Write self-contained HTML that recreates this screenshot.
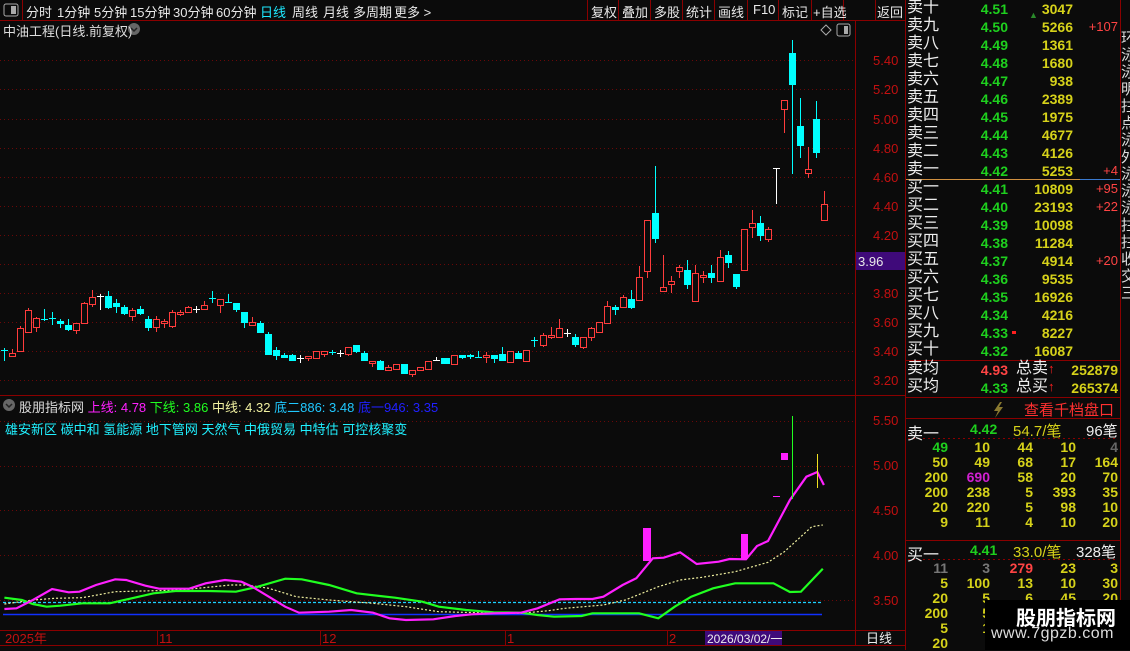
<!DOCTYPE html>
<html><head><meta charset="utf-8"><style>
*{margin:0;padding:0;box-sizing:border-box}
body{width:1130px;height:650px;background:#0b0b0b;overflow:hidden;position:relative;font-family:"Liberation Sans","Noto Sans CJK SC",sans-serif;color:#ddd}
.a{position:absolute;white-space:nowrap}
.tb{font-size:13px;color:#e8e8e8;top:2px}
.ob div{position:absolute;height:18px;line-height:18px;white-space:nowrap}
.lb{left:907px;font-size:16px;color:#eee}
.pr{left:960px;width:48px;text-align:right;font-size:14px;font-weight:bold;color:#1ed01e}
.vo{left:1010px;width:63px;text-align:right;font-size:14px;font-weight:bold;color:#d6d21a}
.ch{left:1075px;width:43px;text-align:right;font-size:13px;color:#ff4444}
.g{position:absolute;font-size:14px;font-weight:bold;color:#d6d21a;text-align:right;width:40px;height:15px;line-height:15px}
</style></head><body>
<svg class="a" style="left:0;top:0" width="1130" height="650" id="s">
<!-- frames -->
<g stroke="#8a0000" stroke-width="1" fill="none">
<line x1="0" y1="20.5" x2="905" y2="20.5"/>
<line x1="855.5" y1="20" x2="855.5" y2="645"/>
<line x1="905.5" y1="0" x2="905.5" y2="650"/>
<line x1="0" y1="395.5" x2="905" y2="395.5"/>
<line x1="0" y1="630.5" x2="905" y2="630.5"/>
<line x1="0" y1="645.5" x2="905" y2="645.5"/>
<line x1="22.5" y1="0" x2="22.5" y2="20"/>
<line x1="1120.5" y1="0" x2="1120.5" y2="650"/>
<line x1="906" y1="360.5" x2="1120" y2="360.5"/>
<line x1="906" y1="397.5" x2="1120" y2="397.5"/>
<line x1="906" y1="418.5" x2="1120" y2="418.5"/>
<line x1="906" y1="540.5" x2="1120" y2="540.5"/>
<line x1="587.5" y1="0" x2="587.5" y2="20"/><line x1="618.5" y1="0" x2="618.5" y2="20"/><line x1="650.5" y1="0" x2="650.5" y2="20"/><line x1="682.5" y1="0" x2="682.5" y2="20"/><line x1="714.5" y1="0" x2="714.5" y2="20"/><line x1="747.5" y1="0" x2="747.5" y2="20"/><line x1="778.5" y1="0" x2="778.5" y2="20"/><line x1="811.5" y1="0" x2="811.5" y2="20"/><line x1="843.5" y1="0" x2="843.5" y2="20"/><line x1="875.5" y1="0" x2="875.5" y2="20"/>
<line x1="157.5" y1="630" x2="157.5" y2="645"/><line x1="320.5" y1="630" x2="320.5" y2="645"/><line x1="505.5" y1="630" x2="505.5" y2="645"/><line x1="667.5" y1="630" x2="667.5" y2="645"/>
</g>
<line x1="906" y1="179.5" x2="1080" y2="179.5" stroke="#d09040"/>
<line x1="1080" y1="179.5" x2="1120" y2="179.5" stroke="#3a7ad0"/>
<line x1="908" y1="438.5" x2="1118" y2="438.5" stroke="#8a0000" stroke-dasharray="2,3"/>
<line x1="908" y1="559.5" x2="1118" y2="559.5" stroke="#8a0000" stroke-dasharray="2,3"/>
<g id="grid" stroke="#6a0808" stroke-dasharray="1,3"></g>
<g id="cd"></g>
<g id="ind" fill="none"></g>
<!-- axis ticks -->
<g fill="#c41010" font-size="13" font-family="Liberation Sans">
<text x="873" y="65">5.40</text><text x="873" y="94">5.20</text><text x="873" y="124">5.00</text><text x="873" y="153">4.80</text><text x="873" y="182">4.60</text><text x="873" y="211">4.40</text><text x="873" y="240">4.20</text><text x="873" y="298">3.80</text><text x="873" y="327">3.60</text><text x="873" y="356">3.40</text><text x="873" y="385">3.20</text>
<text x="873" y="425">5.50</text><text x="873" y="470">5.00</text><text x="873" y="515">4.50</text><text x="873" y="560">4.00</text><text x="873" y="605">3.50</text>
<text x="5" y="643" font-family="Liberation Sans,Noto Sans CJK SC">2025年</text><text x="159" y="643">11</text><text x="322" y="643">12</text><text x="507" y="643">1</text><text x="669" y="643">2</text>
</g>
<rect x="856" y="252" width="49" height="18" fill="#3f0a7a"/>
<text x="858" y="266" fill="#e8e8e8" font-size="13" font-family="Liberation Sans">3.96</text>
<rect x="705" y="631" width="77" height="14" fill="#3f0a7a"/>
<text x="707" y="643" fill="#eee" font-size="12" font-family="Liberation Sans,Noto Sans CJK SC">2026/03/02/一</text>
<text x="866" y="643" fill="#eee" font-size="13" font-family="Liberation Sans,Noto Sans CJK SC">日线</text>
<!-- icons -->
<rect x="4" y="4" width="14" height="12" rx="2" fill="none" stroke="#aaa"/><rect x="11" y="6" width="5" height="8" fill="#aaa"/>
<path d="M826 25 L831 30 L826 35 L821 30Z" fill="none" stroke="#aaa"/>
<rect x="837" y="24" width="13" height="12" rx="2" fill="none" stroke="#aaa"/><rect x="844" y="26" width="4" height="8" fill="#aaa"/>
<circle cx="134" cy="29" r="6" fill="#666"/><path d="M131 28 L134 31 L137 28" stroke="#222" fill="none" stroke-width="1.5"/>
<circle cx="9" cy="405" r="6" fill="#666"/><path d="M6 404 L9 407 L12 404" stroke="#222" fill="none" stroke-width="1.5"/>
<path d="M1000 402 L994 411 L998 411 L995 418 L1003 407 L999 407 L1002 402Z" fill="#8a7a30"/>
<text x="1029" y="18" fill="#2a8a2a" font-size="9">▲</text>
<rect x="1012" y="331" width="4" height="3" fill="#ff2020"/>
</svg>

<!-- toolbar -->
<div class="a tb" style="left:26px">分时</div><div class="a tb" style="left:57px">1分钟</div><div class="a tb" style="left:94px">5分钟</div><div class="a tb" style="left:130px">15分钟</div><div class="a tb" style="left:173px">30分钟</div><div class="a tb" style="left:216px">60分钟</div><div class="a tb" style="left:260px;color:#1ee8ff">日线</div><div class="a tb" style="left:292px">周线</div><div class="a tb" style="left:323px">月线</div><div class="a tb" style="left:353px">多周期</div><div class="a tb" style="left:394px">更多 &gt;</div>
<div class="a tb" style="left:591px">复权</div><div class="a tb" style="left:622px">叠加</div><div class="a tb" style="left:654px">多股</div><div class="a tb" style="left:686px">统计</div><div class="a tb" style="left:718px">画线</div><div class="a tb" style="left:753px">F10</div><div class="a tb" style="left:782px">标记</div><div class="a tb" style="left:813px">+自选</div><div class="a tb" style="left:877px">返回</div>
<div class="a" style="left:3px;top:21px;font-size:13px;color:#ddd">中油工程(日线.前复权)</div>
<div class="a" style="left:19px;top:397px;font-size:13px"><span style="color:#ddd">股朋指标网</span> <span style="color:#ff20ff">上线: 4.78</span> <span style="color:#20ff20">下线: 3.86</span> <span style="color:#f0f0a0">中线: 4.32</span> <span style="color:#20c8ff">底二886: 3.48</span> <span style="color:#2020ff">底一946: 3.35</span></div>
<div class="a" style="left:5px;top:419px;font-size:13px;color:#20f0ff">雄安新区 碳中和 氢能源 地下管网 天然气 中俄贸易 中特估 可控核聚变</div>

<div class="ob" id="ob"></div>
<div class="a" style="left:1024px;top:399px;font-size:15px;color:#ff3030">查看千档盘口</div>
<div class="a" style="left:907px;top:420px;font-size:16px;color:#eee">卖一</div>
<div class="a" style="left:970px;top:421px;font-size:14px;font-weight:bold;color:#1ed01e">4.42</div>
<div class="a" style="left:1013px;top:420px;font-size:15px;color:#d6d21a">54.7/笔</div>
<div class="a" style="left:1086px;top:420px;font-size:15px;color:#eee">96笔</div>
<div class="a" style="left:907px;top:541px;font-size:16px;color:#eee">买一</div>
<div class="a" style="left:970px;top:542px;font-size:14px;font-weight:bold;color:#1ed01e">4.41</div>
<div class="a" style="left:1013px;top:541px;font-size:15px;color:#d6d21a">33.0/笔</div>
<div class="a" style="left:1076px;top:541px;font-size:15px;color:#eee">328笔</div>
<div id="gr"></div>
<div class="a" style="left:1121px;top:30px;width:9px;font-size:15px;line-height:17px;color:#ddd;white-space:normal;overflow:hidden;height:320px">环泳泳明拄点泳外泳泳泳拄拄收交三</div>
<div class="a" style="left:985px;top:600px;width:145px;height:50px;background:#000"></div>
<div class="a" style="left:1016px;top:602px;font-size:20px;font-weight:bold;color:#fff">股朋指标网</div>
<div class="a" style="left:991px;top:625px;font-size:16px;color:#ddd;letter-spacing:0.5px">www.7gpzb.com</div>

<script>
var s='http://www.w3.org/2000/svg',g=document.getElementById('grid');
function L(p,a){var e=document.createElementNS(s,a.t);for(var k in a)if(k!='t')e.setAttribute(k,a[k]);p.appendChild(e);return e}
for(var k=0;k<12;k++){var y=Math.round(60.3+k*29.1)+.5;L(g,{t:'line',x1:0,x2:855,y1:y,y2:y});}
[421,466,510,555,600].forEach(function(y){L(g,{t:'line',x1:0,x2:855,y1:y+.5,y2:y+.5})});
var D=[[350,350,348,361,'c'],[353,356,349,357,'r'],[328,351,326,352,'r'],[310,332,308,333,'r'],[318,327,317,332,'r'],[319,319,309,321,'c'],[318,318,312,325,'c'],[321,323,319,328,'c'],[325,329,319,331,'c'],[323,330,323,334,'r'],[303,323,302,323,'r'],[297,304,290,307,'r'],[296,296,294,310,'w'],[296,307,291,309,'c'],[303,306,299,313,'c'],[307,313,305,315,'c'],[310,316,308,321,'r'],[309,313,306,315,'c'],[319,327,316,331,'c'],[319,327,316,332,'r'],[321,323,319,328,'r'],[312,326,310,328,'r'],[312,314,310,316,'r'],[307,312,306,312,'r'],[309,309,306,313,'w'],[305,309,301,309,'r'],[298,298,291,303,'c'],[299,305,299,313,'r'],[302,302,294,303,'c'],[303,309,303,312,'c'],[312,322,312,328,'c'],[322,325,317,325,'r'],[323,332,321,333,'c'],[334,354,332,354,'c'],[350,355,347,360,'c'],[355,357,353,358,'c'],[355,360,354,360,'c'],[358,358,355,363,'w'],[356,358,356,361,'r'],[351,358,351,358,'r'],[351,354,351,357,'r'],[352,352,350,355,'c'],[353,353,350,357,'w'],[347,354,347,356,'r'],[345,351,345,353,'c'],[353,360,351,360,'c'],[361,363,361,367,'r'],[361,369,360,370,'c'],[367,370,365,371,'r'],[364,369,364,369,'r'],[364,373,364,374,'c'],[370,374,370,377,'r'],[367,370,367,370,'r'],[361,369,361,369,'r'],[360,360,357,361,'w'],[358,363,358,364,'c']];
var cd=document.getElementById('cd');
function C(x,d){var t=d[0],b=d[1],h=d[2],l=d[3],c=d[4];
var col=c=='r'?'#ff3c3c':c=='c'?'#00ffff':'#ffffff';
L(cd,{t:'line',x1:x+.5,x2:x+.5,y1:h,y2:l,stroke:col});
if(c=='w'||b-t<1){L(cd,{t:'line',x1:x-3,x2:x+4,y1:t+.5,y2:t+.5,stroke:col});return}
if(c=='r')L(cd,{t:'rect',x:x-2.5,y:t+.5,width:6,height:b-t,fill:'#0b0b0b',stroke:col});
else L(cd,{t:'rect',x:x-3,y:t,width:7,height:b-t+1,fill:col});}
D.forEach(function(d,i){C(4+8*i,d)});
var E=[[446,358,363,358,364,'c'],[454,355,364,355,364,'r'],[462,355,357,355,359,'c'],[470,355,356,354,359,'c'],[478,357,357,351,357,'c'],[486,355,357,352,363,'r'],[494,355,358,355,363,'c'],[502,354,360,347,360,'c'],[510,351,362,351,362,'r'],[518,353,358,351,359,'c'],[526,350,361,350,361,'r'],[534,340,340,337,347,'c'],[543,335,345,333,347,'r'],[551,335,337,327,339,'r'],[559,328,337,319,337,'r'],[567,333,333,329,337,'w'],[575,337,344,334,347,'c'],[583,337,347,337,349,'r'],[591,328,337,327,341,'r'],[599,322,332,322,332,'r'],[607,306,323,301,323,'r'],[615,307,309,305,315,'c'],[623,297,307,295,307,'r'],[631,299,307,290,309,'c'],[639,277,300,266,300,'r'],[647,220,271,220,278,'r'],[655,213,238,166,243,'c'],[663,287,291,255,291,'r'],[671,281,284,276,293,'r'],[679,267,271,265,278,'r'],[687,270,284,260,289,'c'],[695,273,301,265,301,'r'],[703,275,277,271,283,'r'],[711,273,277,265,283,'c'],[720,257,281,250,281,'r'],[728,255,262,251,268,'c'],[736,274,286,274,289,'c'],[744,229,270,229,270,'r'],[752,223,227,210,238,'r'],[760,223,235,216,241,'c'],[768,229,239,227,242,'r'],[776,168,168,168,204,'w'],[784,100,109,100,133,'r'],[792,53,84,40,174,'c'],[800,126,145,98,158,'c'],[808,169,173,147,178,'r'],[816,119,152,101,158,'c'],[824,204,220,191,220,'r']];
E.forEach(function(d){C(d[0],d.slice(1))});
var ind=document.getElementById('ind');
function P(a,col,w,da){var p=[];for(var i=0;i<a.length;i+=2)p.push((a[i]/1.823).toFixed(1)+','+(400+a[i+1]/3).toFixed(1));var o={t:'polyline',points:p.join(' '),stroke:col,'stroke-width':w};if(da)o['stroke-dasharray']=da;L(ind,o)}
L(ind,{t:'line',x1:3,x2:822,y1:602.5,y2:602.5,stroke:'#20d0ff','stroke-width':1.3,'stroke-dasharray':'3,2'});
L(ind,{t:'line',x1:3,x2:822,y1:614.5,y2:614.5,stroke:'#1030ff','stroke-width':1.5});
P([8,612,60,600,100,595,150,593,210,575,260,573,330,570,420,555,450,555,490,565,540,590,600,600,680,610,740,620,800,635,870,638,950,640,1000,632,1030,625,1100,615,1140,600,1200,560,1240,540,1280,532,1340,515,1400,487,1430,455,1480,380,1500,375],'#f0f0a0',1.2,'2,2');
P([8,593,40,600,60,612,85,620,110,617,150,610,200,610,240,595,280,580,320,573,380,573,430,575,470,560,520,536,550,538,600,555,650,580,720,593,770,605,800,620,850,630,900,637,950,638,980,645,1010,650,1060,648,1080,640,1165,640,1200,655,1230,620,1260,590,1300,565,1340,550,1410,550,1440,576,1460,575,1500,506],'#20ff20',2.2);
P([8,627,30,625,60,600,95,567,125,577,145,575,175,555,210,538,230,540,265,557,290,566,345,566,375,550,410,540,440,545,460,560,490,590,520,620,545,638,600,635,640,630,680,638,710,655,740,660,790,658,830,648,860,643,900,640,950,638,980,625,1020,598,1050,597,1080,597,1100,590,1135,555,1160,535,1190,475,1210,473,1240,457,1270,492,1310,485,1330,477,1360,478,1380,438,1400,423,1440,300,1470,230,1490,216,1502,255],'#ff20ff',2.2);
L(ind,{t:'rect',x:643,y:528,width:8,height:33,fill:'#ff20ff'});
L(ind,{t:'rect',x:741,y:534,width:7,height:25,fill:'#ff20ff'});
L(ind,{t:'rect',x:781,y:453,width:7,height:7,fill:'#ff20ff'});
L(ind,{t:'line',x1:773,x2:780,y1:496.5,y2:496.5,stroke:'#ff20ff'});
L(ind,{t:'line',x1:792.5,x2:792.5,y1:416,y2:499,stroke:'#20ff20'});
L(ind,{t:'line',x1:817.5,x2:817.5,y1:454,y2:488,stroke:'#f0e020'});
// order book
var ob=document.getElementById('ob'),h='';
var S=[['卖十','4.51','3047',''],['卖九','4.50','5266','+107'],['卖八','4.49','1361',''],['卖七','4.48','1680',''],['卖六','4.47','938',''],['卖五','4.46','2389',''],['卖四','4.45','1975',''],['卖三','4.44','4677',''],['卖二','4.43','4126',''],['卖一','4.42','5253','+4'],['买一','4.41','10809','+95'],['买二','4.40','23193','+22'],['买三','4.39','10098',''],['买四','4.38','11284',''],['买五','4.37','4914','+20'],['买六','4.36','9535',''],['买七','4.35','16926',''],['买八','4.34','4216',''],['买九','4.33','8227',''],['买十','4.32','16087','']];
S.forEach(function(r,i){var y=i*18;h+='<div class="lb" style="top:'+(y-1)+'px">'+r[0]+'</div><div class="pr" style="top:'+y+'px">'+r[1]+'</div><div class="vo" style="top:'+y+'px">'+r[2]+'</div><div class="ch" style="top:'+y+'px">'+r[3]+'</div>'});
h+='<div class="lb" style="top:360px">卖均</div><div class="pr" style="top:361px;color:#ff4444">4.93</div><div class="a" style="left:1016px;top:360px;font-size:16px;color:#eee">总卖<span style="color:#ff2020;font-size:13px">↑</span></div><div class="vo" style="top:361px;left:1055px;">252879</div>';
h+='<div class="lb" style="top:378px">买均</div><div class="pr" style="top:379px">4.33</div><div class="a" style="left:1016px;top:378px;font-size:16px;color:#eee">总买<span style="color:#ff2020;font-size:13px">↑</span></div><div class="vo" style="top:379px;left:1055px;">265374</div>';
ob.innerHTML=h;
var G=[[['49','#1ed01e'],'10','44','10',['4','#666']],['50','49','68','17','164'],['200',['690','#d020d0'],'58','20','70'],['200','238','5','393','35'],['20','220','5','98','10'],['9','11','4','10','20']];
var G2=[[['11','#777'],['3','#777'],['279','#ff4444'],'23','3'],['5','100','13','10','30'],['20','5','6','45','20'],['200','5','','',''],['5','1','','',''],['20','','','','']];
var X=[908,950,993,1036,1078],gh='';
function grid(A,y0){A.forEach(function(r,i){r.forEach(function(c,j){var t=c,col='';if(typeof c!='string'){t=c[0];col='color:'+c[1]}gh+='<div class="g" style="left:'+X[j]+'px;top:'+(y0+i*15)+'px;'+col+'">'+t+'</div>'})})}
grid(G,440);grid(G2,561);
document.getElementById('gr').innerHTML=gh;
</script>
</body></html>
